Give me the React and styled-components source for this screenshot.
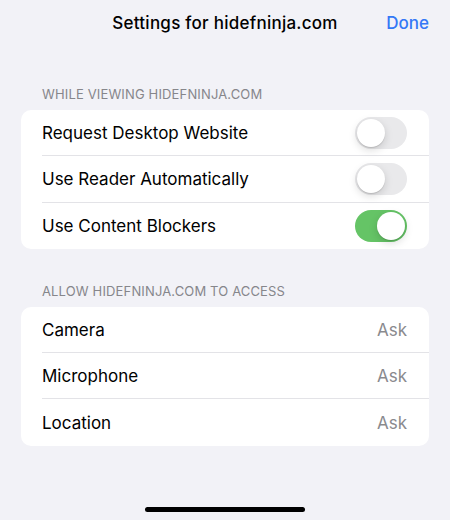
import React from 'react';
import styled, { createGlobalStyle } from 'styled-components';

const GlobalStyle = createGlobalStyle`
    html, body {
        margin: 0;
        padding: 0;
        background: #f2f2f7;
    }
    * {
        box-sizing: border-box;
    }
`;

const Page = styled.div`
    width: 450px;
    height: 520px;
    background: #f2f2f7;
    display: flex;
    flex-direction: column;
    font-family: Inter, 'Liberation Sans', Arial, sans-serif;
    color: #000000;
    overflow: hidden;
`;

const Header = styled.div`
    height: 45px;
    display: grid;
    grid-template-columns: 1fr auto 1fr;
    align-items: center;
    padding: 0 21px;
`;

const Title = styled.h1`
    grid-column: 2;
    margin: 0;
    font-size: 17px;
    font-weight: 500;
    letter-spacing: 0.25px;
`;

const DoneButton = styled.button`
    grid-column: 3;
    justify-self: end;
    background: none;
    border: none;
    padding: 0;
    font-family: inherit;
    font-size: 17px;
    font-weight: 500;
    color: #3478f6;
    cursor: pointer;
`;

const SectionLabel = styled.div`
    margin: ${(props) => props.$top}px 0 8px;
    padding: 0 42px;
    font-size: 13px;
    line-height: 16px;
    color: #86868b;
    letter-spacing: 0.15px;
`;

const Card = styled.div`
    margin: 0 21px;
    background: #ffffff;
    border-radius: 10px;
    overflow: hidden;
`;

const Row = styled.div`
    height: 46.3px;
    padding-left: 21px;
    display: flex;
`;

const RowInner = styled.div`
    flex: 1;
    display: flex;
    align-items: center;
    justify-content: space-between;
    padding-right: 22px;
    border-bottom: ${(props) => (props.$last ? 'none' : '1px solid #e3e3e7')};
`;

const RowLabel = styled.span`
    font-size: 17px;
`;

const Value = styled.span`
    font-size: 17px;
    color: #8a8a8e;
`;

const Track = styled.span`
    position: relative;
    width: 52px;
    height: 32px;
    border-radius: 16px;
    background: ${(props) => (props.$on ? '#65c466' : '#e9e9eb')};
`;

const Knob = styled.span`
    position: absolute;
    top: 2px;
    left: ${(props) => (props.$on ? '22px' : '2px')};
    width: 28px;
    height: 28px;
    border-radius: 50%;
    background: #ffffff;
    box-shadow: 0 3px 8px rgba(0, 0, 0, 0.15), 0 1px 1px rgba(0, 0, 0, 0.12);
`;

const HomeBar = styled.div`
    margin: auto auto 8px;
    width: 160px;
    height: 5px;
    border-radius: 3px;
    background: #000000;
`;

const Toggle = ({ on }) => (
    <Track $on={on}>
        <Knob $on={on} />
    </Track>
);

const toggles = [
    { label: 'Request Desktop Website', on: false },
    { label: 'Use Reader Automatically', on: false },
    { label: 'Use Content Blockers', on: true },
];

const permissions = ['Camera', 'Microphone', 'Location'];

const App = () => {
    return (
        <Page>
            <GlobalStyle />
            <Header>
                <Title>Settings for hidefninja.com</Title>
                <DoneButton>Done</DoneButton>
            </Header>

            <SectionLabel $top={41}>WHILE VIEWING HIDEFNINJA.COM</SectionLabel>
            <Card>
                {toggles.map((t, i) => (
                    <Row key={t.label}>
                        <RowInner $last={i === toggles.length - 1}>
                            <RowLabel>{t.label}</RowLabel>
                            <Toggle on={t.on} />
                        </RowInner>
                    </Row>
                ))}
            </Card>

            <SectionLabel $top={34}>ALLOW HIDEFNINJA.COM TO ACCESS</SectionLabel>
            <Card>
                {permissions.map((p, i) => (
                    <Row key={p}>
                        <RowInner $last={i === permissions.length - 1}>
                            <RowLabel>{p}</RowLabel>
                            <Value>Ask</Value>
                        </RowInner>
                    </Row>
                ))}
            </Card>

            <HomeBar />
        </Page>
    );
};

export default App;
